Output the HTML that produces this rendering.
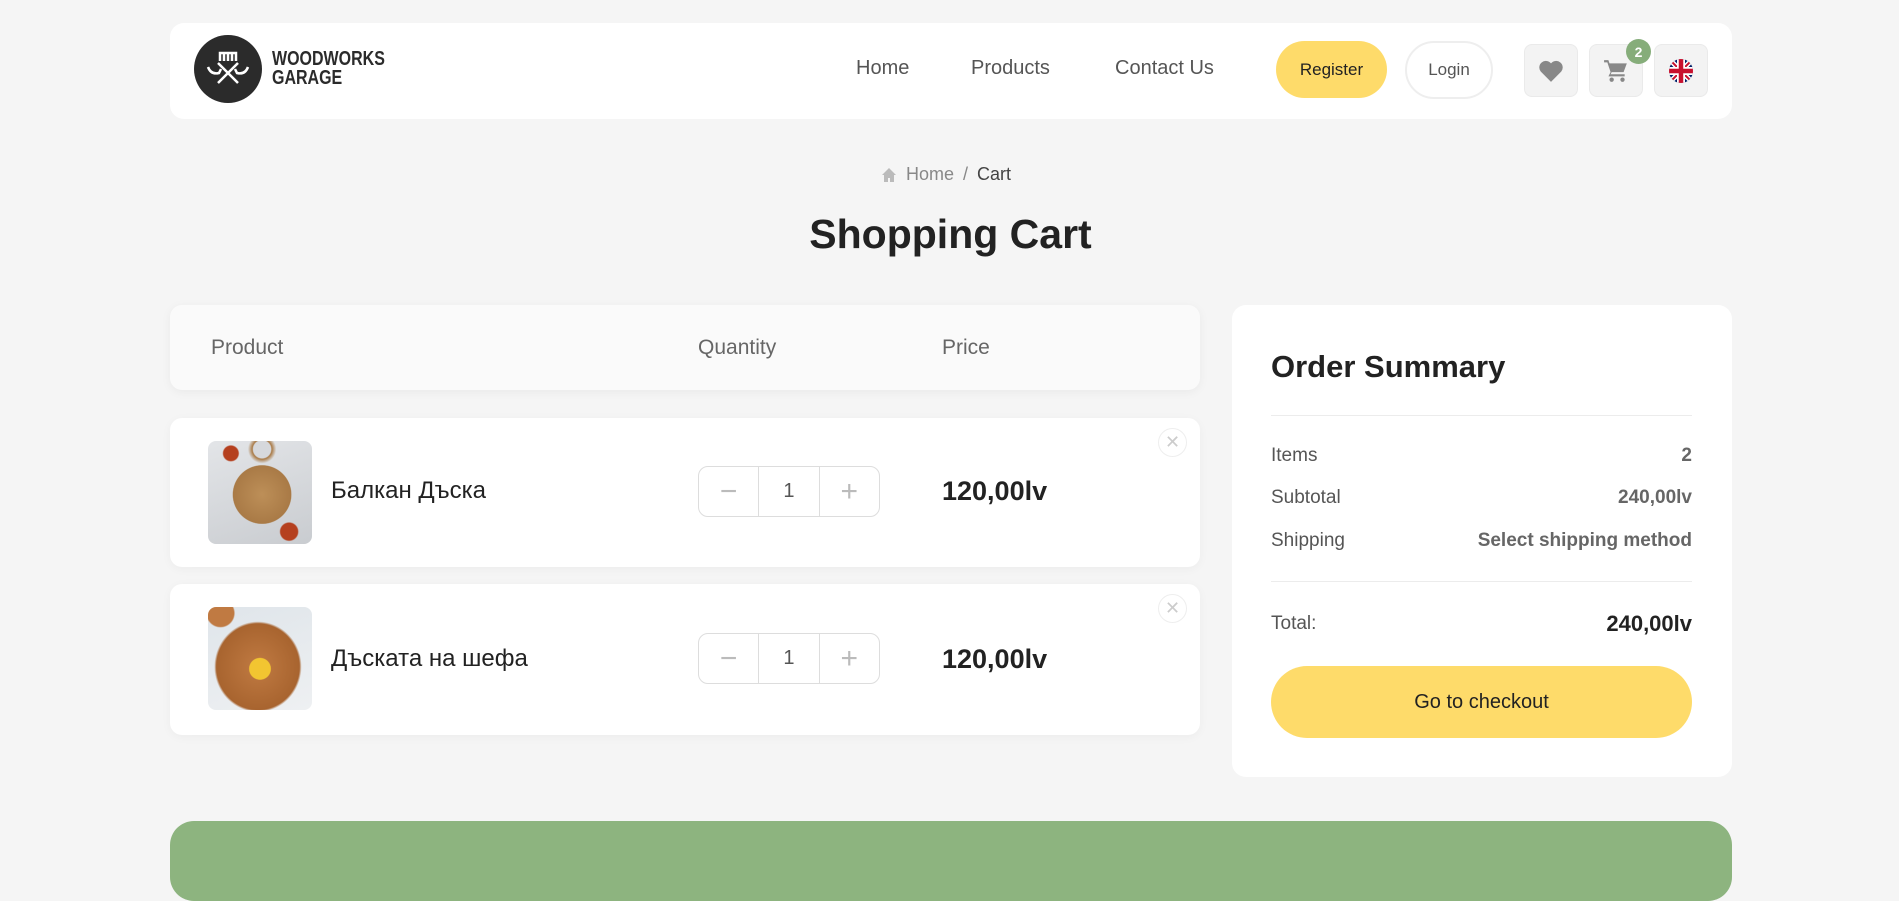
<!DOCTYPE html>
<html><head><meta charset="utf-8"><style>
*{box-sizing:border-box;margin:0;padding:0}
body{width:1899px;height:874px;background:#f5f5f5;font-family:"Liberation Sans",sans-serif;color:#222;position:relative;overflow:hidden}
.a{position:absolute}
.card{background:#fff;border-radius:14px}
.nav{font-size:20px;color:#555;top:57px}
.icon{width:54px;height:53px;background:#f3f3f3;border:1px solid #eaeaea;border-radius:8px;top:44px;display:flex;align-items:center;justify-content:center}
.th{font-size:21px;color:#666;top:336px}
.row{left:170px;width:1030px;background:#fff;border-radius:12px;box-shadow:0 2px 10px rgba(0,0,0,.04)}
.img{left:38px;top:23px;width:104px;height:103px;border-radius:8px;overflow:hidden}
.name{left:161px;font-size:24px;color:#222}
.qty{left:528px;width:182px;height:51px;border:1px solid #ddd;border-radius:10px;display:flex}
.qty div{flex:1;display:flex;align-items:center;justify-content:center;font-size:20px;color:#555}
.qty div+div{border-left:1px solid #ddd}
.qty .b{color:#bbb;font-size:30px;font-weight:300}
.price{left:772px;font-size:27px;font-weight:bold;color:#222}
.x{left:988px;top:10px;width:29px;height:29px;border:1px solid #eee;border-radius:50%;color:#ccc;font-size:18px;display:flex;align-items:center;justify-content:center}
.sl{left:1271px;font-size:19px;color:#555}
.sr{right:207px;font-size:19px;font-weight:bold;color:#666}
.hr{left:1271px;width:421px;height:1px;background:#ececec}
</style></head><body>
<div class="a card" style="left:170px;top:23px;width:1562px;height:96px"></div>
<div class="a" style="left:194px;top:35px;width:68px;height:68px;border-radius:50%;background:#2b2b2b">
<svg width="68" height="68" viewBox="0 0 68 68" fill="none" stroke="#fff" stroke-width="2.5"><path d="M24 48 L44 28 M44 48 L24 28 M14 32 q3 8 11 6 l2 -4 M54 32 q-3 8 -11 6 l-2 -4 M26 26 l0 -8 l16 0 l0 8 M30 18 l0 8 M34 18 l0 8 M38 18 l0 8"/></svg></div>
<div class="a" style="left:272px;top:50px;font-size:20px;font-weight:bold;line-height:19px;color:#2b2b2b;transform:scaleX(.8);transform-origin:left">WOODWORKS<br>GARAGE</div>
<div class="a nav" style="left:856px">Home</div>
<div class="a nav" style="left:971px">Products</div>
<div class="a nav" style="left:1115px">Contact Us</div>
<div class="a" style="left:1276px;top:41px;width:111px;height:57px;border-radius:29px;background:#fedb6a;font-size:17px;display:flex;align-items:center;justify-content:center;color:#222">Register</div>
<div class="a" style="left:1405px;top:41px;width:88px;height:58px;border-radius:29px;border:2px solid #eee;font-size:17px;display:flex;align-items:center;justify-content:center;color:#555">Login</div>
<div class="a icon" style="left:1524px"><svg width="26" height="24" viewBox="0 0 24 22"><path d="M12 21 L2.5 11.5 A5.5 5.5 0 0 1 12 4 A5.5 5.5 0 0 1 21.5 11.5Z" fill="#888"/></svg></div>
<div class="a icon" style="left:1589px"><svg width="28" height="26" viewBox="0 0 24 24" fill="#888"><path d="M1 2h4l1 3h16l-3 8H8l-1 2h13v2H5l2-4L4 4H1z"/><circle cx="8" cy="20" r="2"/><circle cx="18" cy="20" r="2"/></svg></div>
<div class="a" style="left:1626px;top:39px;width:25px;height:25px;border-radius:50%;background:#86ad7a;color:#fff;font-size:14px;font-weight:bold;display:flex;align-items:center;justify-content:center">2</div>
<div class="a icon" style="left:1654px"><svg width="26" height="26" viewBox="0 0 26 26"><clipPath id="c"><circle cx="13" cy="13" r="12"/></clipPath><g clip-path="url(#c)"><rect width="26" height="26" fill="#012169"/><path d="M0 0L26 26M26 0L0 26" stroke="#fff" stroke-width="5"/><path d="M0 0L26 26M26 0L0 26" stroke="#c8102e" stroke-width="2"/><path d="M13 0V26M0 13H26" stroke="#fff" stroke-width="8"/><path d="M13 0V26M0 13H26" stroke="#c8102e" stroke-width="4.5"/></g></svg></div>

<svg class="a" style="left:881px;top:167px" width="16" height="16" viewBox="0 0 16 16"><path d="M8 1L1 8h2v7h4v-4h2v4h4V8h2z" fill="#bbb"/></svg>
<div class="a" style="left:906px;top:164px;font-size:18px;color:#888">Home <span style="margin:0 4px">/</span> <span style="color:#444">Cart</span></div>
<div class="a" style="left:0;width:1899px;top:211px;text-align:center;font-size:41px;font-weight:bold;color:#222;padding-left:2px">Shopping Cart</div>

<div class="a" style="left:170px;top:305px;width:1030px;height:85px;background:#fafafa;border-radius:12px;box-shadow:0 2px 10px rgba(0,0,0,.05)"></div>
<div class="a th" style="left:211px">Product</div>
<div class="a th" style="left:698px">Quantity</div>
<div class="a th" style="left:942px">Price</div>

<div class="a row" style="top:418px;height:149px">
<div class="a img" style="background:radial-gradient(circle at 22% 12%,#b5401f 0,#b5401f 6%,transparent 7%),radial-gradient(circle at 78% 88%,#b5401f 0,#b5401f 7%,transparent 8%),radial-gradient(circle at 52% 52%,#bd8f58 0,#a97a46 38%,transparent 39%),radial-gradient(circle at 52% 8%,#d6d8dc 0,#d6d8dc 8%,#a97a46 9%,transparent 13%),linear-gradient(160deg,#e3e5e8,#c9ccd0)"></div>
<div class="a name" style="top:59px">Балкан Дъска</div>
<div class="a qty" style="top:48px"><div class="b">−</div><div>1</div><div class="b">+</div></div>
<div class="a price" style="top:58px">120,00lv</div>
<div class="a x">✕</div>
</div>
<div class="a row" style="top:584px;height:151px">
<div class="a img" style="background:radial-gradient(circle at 50% 60%,#f2c531 0,#f2c531 13%,transparent 14%),radial-gradient(ellipse 42% 44% at 48% 58%,#c07a42 0,#a8642f 95%,transparent 100%),radial-gradient(circle at 12% 6%,#c07a42 0,#c07a42 10%,transparent 11%),linear-gradient(160deg,#dfe5ea,#eef0f2)"></div>
<div class="a name" style="top:61px">Дъската на шефа</div>
<div class="a qty" style="top:49px"><div class="b">−</div><div>1</div><div class="b">+</div></div>
<div class="a price" style="top:60px">120,00lv</div>
<div class="a x">✕</div>
</div>

<div class="a card" style="left:1232px;top:305px;width:500px;height:472px"></div>
<div class="a" style="left:1271px;top:349px;font-size:31px;font-weight:bold;color:#222">Order Summary</div>
<div class="a hr" style="top:415px"></div>
<div class="a sl" style="top:445px">Items</div><div class="a sr" style="top:445px">2</div>
<div class="a sl" style="top:487px">Subtotal</div><div class="a sr" style="top:487px">240,00lv</div>
<div class="a sl" style="top:530px">Shipping</div><div class="a sr" style="top:530px">Select shipping method</div>
<div class="a hr" style="top:581px"></div>
<div class="a sl" style="top:613px">Total:</div><div class="a sr" style="top:611px;font-size:22px;color:#222">240,00lv</div>
<div class="a" style="left:1271px;top:666px;width:421px;height:72px;border-radius:36px;background:#fedb6a;font-size:20px;display:flex;align-items:center;justify-content:center;color:#222">Go to checkout</div>

<div class="a" style="left:170px;top:821px;width:1562px;height:80px;border-radius:24px;background:#8db47f"></div>
</body></html>
